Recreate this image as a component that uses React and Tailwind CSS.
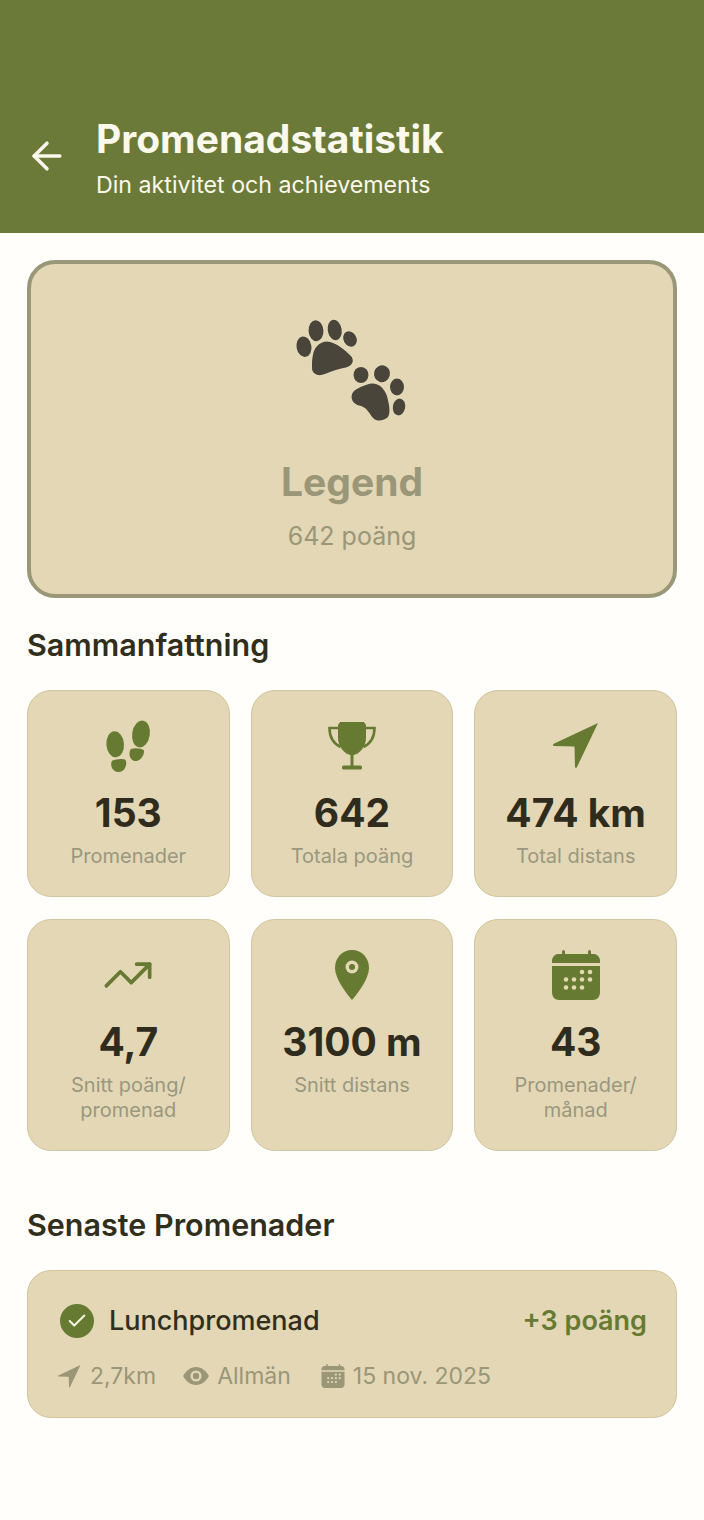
import React from 'react';
import { ArrowLeft, Check, TrendingUp } from 'lucide-react';

const font = { fontFamily: 'Inter, sans-serif' };

const Paws = () => (
    <svg viewBox="0 0 180 140" className="w-[180px] h-[140px] -ml-[4px] text-[#49453a]" fill="currentColor" stroke="#efe7cc" strokeWidth="0.8" paintOrder="stroke">
        <ellipse cx="44" cy="46.700" rx="7.500" ry="10.300" transform="rotate(-10 44 46.700)" />
        <ellipse cx="56" cy="30.700" rx="7.500" ry="10.500" transform="rotate(-4 56 30.700)" />
        <ellipse cx="74.700" cy="30" rx="7" ry="10.300" transform="rotate(-10 74.700 30)" />
        <ellipse cx="90" cy="39" rx="6.500" ry="8" transform="rotate(-30 90 39)" />
        <path d="M67 41.500C76 42 85 50 91 56C95 61 92 66 86 67.500C78 69 72 71 65 74C58 77 51 74 52 66C52 58 53 50 57 46C60 43 63 41.500 67 41.500Z" />
        <ellipse cx="101" cy="75" rx="7.500" ry="8" />
        <ellipse cx="122" cy="73.700" rx="8" ry="8.500" transform="rotate(15 122 73.700)" />
        <ellipse cx="137" cy="87" rx="7" ry="8.500" />
        <ellipse cx="139" cy="107" rx="6.200" ry="8.500" transform="rotate(10 139 107)" />
        <path d="M92 94C94 89 102 86 109 84C118 82 124 88 127 96C129 104 131 112 128 117C124 121 117 122 113 118C109 113 107 108 101 106C95 105 90 101 92 94Z" />
    </svg>
);

const Steps = () => (
    <svg viewBox="8.500 9 60 54" className="w-[60px] h-[54px] text-[#667a32]" fill="currentColor">
        <ellipse cx="25.700" cy="34.300" rx="8.800" ry="13" transform="rotate(-4 25.700 34.300)" />
        <path d="M23 50.500c3-1.500 11-2.500 13-.5 2 3 0 10-4 11.500-4 1.500-9-.5-10-5-.5-2.500-.5-4.500 1-6z" />
        <ellipse cx="51.500" cy="24" rx="8.800" ry="13.500" transform="rotate(9 51.500 24)" />
        <path d="M41.500 39c4-1.500 11-.5 13 1.500.5 4-3 10-7.500 10.500-4 .5-7-3-7-7 0-2.500.5-4 1.500-5z" />
    </svg>
);

const Trophy = () => (
    <svg viewBox="0 0 50 50" className="w-[50px] h-[50px] text-[#667a32]" fill="currentColor">
        <path d="M13 1h24l2 3v13c0 9-7 16-12 17h-4c-5-1-12-8-12-17V4z" />
        <path d="M11 7H2.500c0 8 3 15 11 19M39 7h8.500c0 8-3 15-11 19" fill="none" stroke="currentColor" strokeWidth="2.600" />
        <rect x="23.500" y="32" width="3" height="14" />
        <rect x="15" y="44.500" width="20" height="4" rx="1.500" />
    </svg>
);

const Nav = ({ className }) => (
    <svg viewBox="0 0 46 46" className={className} fill="currentColor">
        <path d="M45 0 24 44c-.6 1.300-2 1-2-.4l-.5-20-20.300-.6c-1.500 0-1.700-1.500-.4-2.200z" />
    </svg>
);

const Pin = () => (
    <svg viewBox="0 0 36 50" className="w-[36px] h-[50px] text-[#667a32]">
        <path d="M18 0C8 0 1 8 1 18c0 10 10 24 17 32 7-8 17-22 17-32C35 8 28 0 18 0z" fill="currentColor" />
        <circle cx="18" cy="17" r="6.500" fill="#e3d7b5" />
        <circle cx="18" cy="17" r="3" fill="currentColor" />
    </svg>
);

const Calendar = ({ className, fill = '#e3d7b5' }) => (
    <svg viewBox="0 0 48 50" className={className} fill="currentColor">
        <rect x="10" y="0" width="3" height="7" rx="1.500" />
        <rect x="36" y="0" width="3" height="7" rx="1.500" />
        <path d="M6 4h36c3 0 6 3 6 7v2H0v-2c0-4 3-7 6-7z" />
        <path d="M0 16h48v26c0 5-3 8-7 8H7c-4 0-7-3-7-8z" />
        {[[30, 22], [38, 22], [14, 29.500], [22, 29.500], [30, 29.500], [38, 29.500], [14, 37.500], [22, 37.500], [30, 37.500]].map(([x, y]) => (
            <circle key={`${x}-${y}`} cx={x} cy={y} r="2.300" fill={fill} />
        ))}
    </svg>
);

const Eye = ({ className }) => (
    <svg viewBox="0 0 26 18" className={className}>
        <path d="M13 0C7 0 3 4 0 9c3 5 7 9 13 9s10-4 13-9c-3-5-7-9-13-9z" fill="currentColor" />
        <circle cx="13" cy="9" r="5.500" fill="#e3d7b5" />
        <circle cx="13" cy="9" r="3.200" fill="currentColor" />
    </svg>
);

const stats = [
    { icon: <Steps />, value: '153', label: ['Promenader'] },
    { icon: <Trophy />, value: '642', label: ['Totala poäng'] },
    { icon: <Nav className="w-[46px] h-[46px] text-[#667a32]" />, value: '474 km', label: ['Total distans'] },
    { icon: <TrendingUp className="text-[#667a32]" size={52} strokeWidth={1.700} />, value: '4,7', label: ['Snitt poäng/', 'promenad'] },
    { icon: <Pin />, value: '3100 m', label: ['Snitt distans'] },
    { icon: <Calendar className="w-[48px] h-[50px] text-[#667a32]" />, value: '43', label: ['Promenader/', 'månad'] },
];

const StatCard = ({ stat }) => (
    <div className="flex flex-col items-center bg-[#e3d7b5] border-[1.500px] border-[#d0c59c] rounded-[24px] pt-[29px] pb-[27px]">
        <div className="h-[52px] flex items-center justify-center">{stat.icon}</div>
        <div className="mt-[18px] text-[39px] leading-[46px] font-bold text-[#2f2c1e] whitespace-nowrap">{stat.value}</div>
        <div className="mt-[8px] text-[20px] leading-[25px] text-center text-[#9a9780]">
            {stat.label.map((line) => <div key={line}>{line}</div>)}
        </div>
    </div>
);

export default function App() {
    return (
        <div className="min-h-[1520px] bg-[#fffefb]" style={font}>
            <header className="h-[233px] bg-[#6b7a38] flex items-end pb-[34px] pl-[25px] text-[#fbf8ec]">
                <ArrowLeft className="mb-[21px] mr-[27px] shrink-0" size={44} strokeWidth={1.900} />
                <div>
                    <h1 className="text-[39px] leading-[46px] font-bold">Promenadstatistik</h1>
                    <p className="mt-[9px] text-[23.200px] leading-[28px]">Din aktivitet och achievements</p>
                </div>
            </header>

            <main className="px-[27px] pt-[27px]">
                <section className="h-[338px] bg-[#e3d7b5] border-[4px] border-[#9a9678] rounded-[28px] flex flex-col items-center pt-[36px]">
                    <Paws />
                    <div className="mt-[19px] text-[39px] leading-[46px] font-bold text-[#9a9678]">Legend</div>
                    <div className="mt-[14px] text-[25px] leading-[34px] text-[#9a9678]">642 poäng</div>
                </section>

                <h2 className="mt-[29px] text-[30.500px] leading-[36px] font-semibold text-[#312e1c]">Sammanfattning</h2>

                <div className="mt-[27px] grid grid-cols-3 gap-x-[21px] gap-y-[22px]">
                    {stats.map((stat) => <StatCard key={stat.value} stat={stat} />)}
                </div>

                <h2 className="mt-[56px] text-[30.500px] leading-[36px] font-semibold text-[#312e1c]">Senaste Promenader</h2>

                <section className="mt-[27px] h-[148px] bg-[#e3d7b5] border-[1.500px] border-[#d0c59c] rounded-[24px] pt-[33px] pl-[32px] pr-[29px]">
                    <div className="flex items-center">
                        <span className="w-[34px] h-[34px] rounded-full bg-[#667a32] flex items-center justify-center text-[#f6f2e0]">
                            <Check size={22} strokeWidth={2.200} />
                        </span>
                        <span className="ml-[15px] text-[27px] leading-[34px] font-medium text-[#312e1c]">Lunchpromenad</span>
                        <span className="ml-auto text-[27px] leading-[34px] font-semibold text-[#667a32]">+3 poäng</span>
                    </div>
                    <div className="mt-[22px] flex items-center text-[23px] leading-[32px] text-[#9a9678]">
                        <Nav className="w-[23px] h-[23px] -ml-[2px]" />
                        <span className="ml-[9px]">2,7km</span>
                        <Eye className="ml-[27px] w-[26px] h-[18px]" />
                        <span className="ml-[8px]">Allmän</span>
                        <Calendar className="ml-[30px] w-[24px] h-[24px]" />
                        <span className="ml-[8px]">15 nov. 2025</span>
                    </div>
                </section>
            </main>
        </div>
    );
}
